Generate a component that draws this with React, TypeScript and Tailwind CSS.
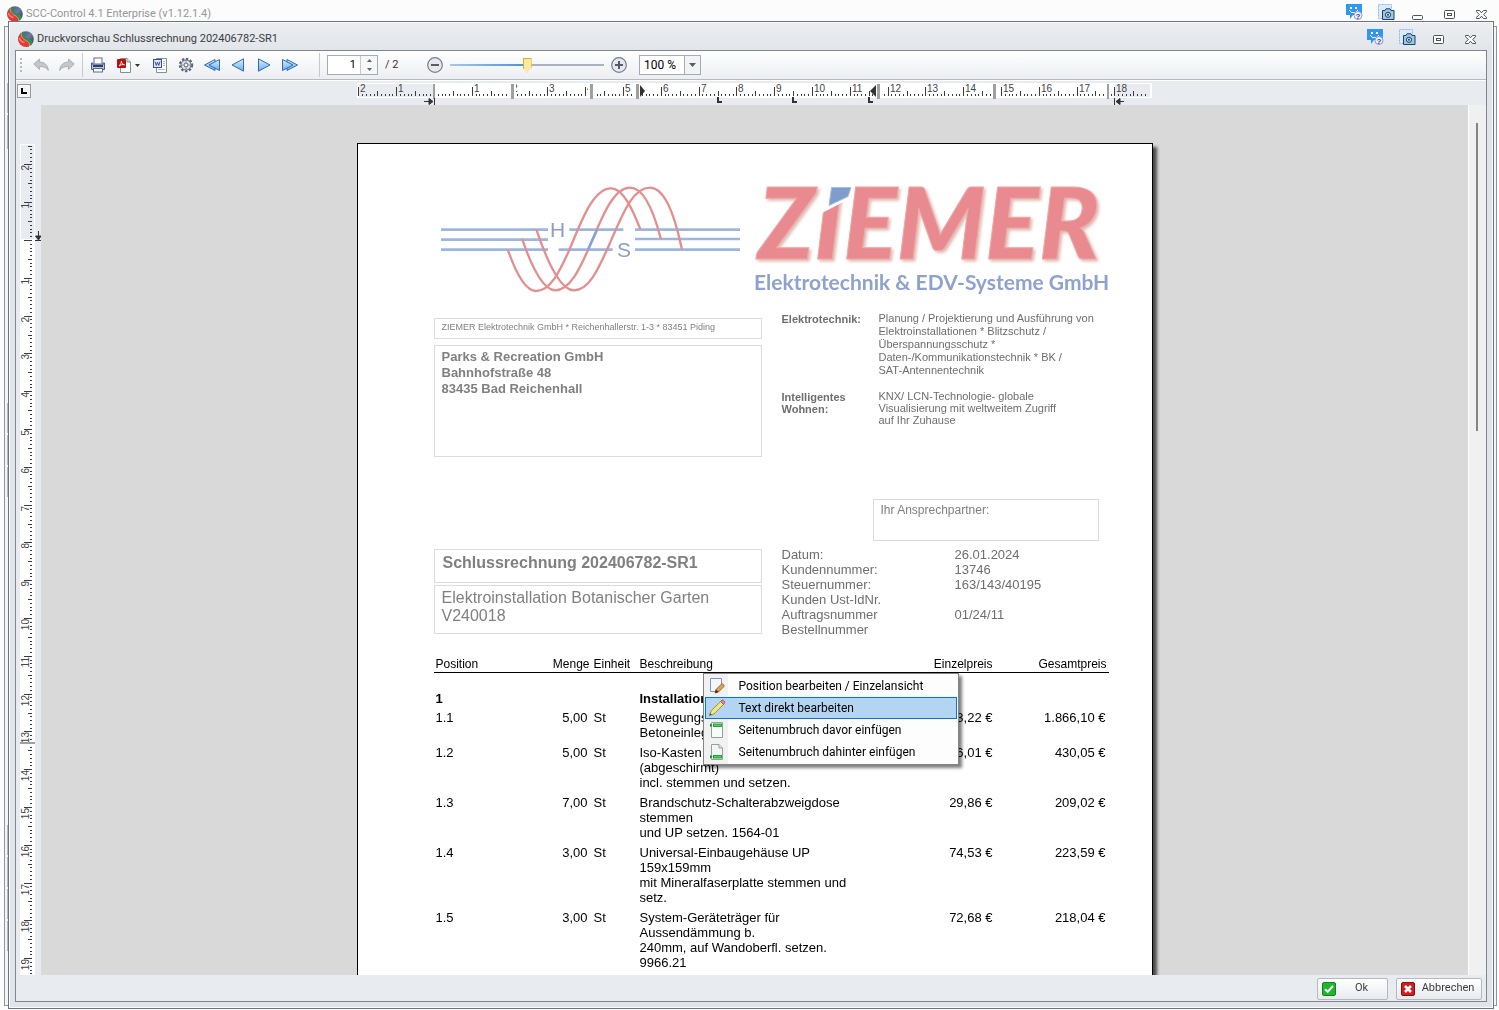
import React, { useState } from 'react';

const CM = 37.8;

const UI_FONT = "font-['Roboto','Open_Sans',sans-serif]";

interface Position {
  nr: string;
  menge: string;
  einheit: string;
  text: string[];
  einzel: string;
  gesamt: string;
}

const positions: Position[] = [
  { nr: '1.1', menge: '5,00', einheit: 'St', text: ['Bewegungsmelder', 'Betoneinlegedose'], einzel: '373,22 €', gesamt: '1.866,10 €' },
  { nr: '1.2', menge: '5,00', einheit: 'St', text: ['Iso-Kasten', '(abgeschirmt)', 'incl. stemmen und setzen.'], einzel: '86,01 €', gesamt: '430,05 €' },
  { nr: '1.3', menge: '7,00', einheit: 'St', text: ['Brandschutz-Schalterabzweigdose', 'stemmen', 'und UP setzen. 1564-01'], einzel: '29,86 €', gesamt: '209,02 €' },
  { nr: '1.4', menge: '3,00', einheit: 'St', text: ['Universal-Einbaugehäuse UP', '159x159mm', 'mit Mineralfaserplatte stemmen und', 'setz.'], einzel: '74,53 €', gesamt: '223,59 €' },
  { nr: '1.5', menge: '3,00', einheit: 'St', text: ['System-Geräteträger für', 'Aussendämmung b.', '240mm, auf Wandoberfl. setzen.', '9966.21'], einzel: '72,68 €', gesamt: '218,04 €' },
];

const meta = [
  ['Datum:', '26.01.2024'],
  ['Kundennummer:', '13746'],
  ['Steuernummer:', '163/143/40195'],
  ['Kunden Ust-IdNr.', ''],
  ['Auftragsnummer', '01/24/11'],
  ['Bestellnummer', ''],
];

/* ---------- Icons ---------- */

const AppLogo = () => (
  <svg width="16" height="16" viewBox="0 0 16 16" className="shrink-0">
    <defs>
      <linearGradient id="navy" x1="0" y1="0" x2="1" y2="1">
        <stop offset="0" stopColor="#3d5277" />
        <stop offset=".5" stopColor="#6b7c9e" />
        <stop offset="1" stopColor="#1d2c4a" />
      </linearGradient>
      <clipPath id="ball">
        <circle cx="8" cy="8" r="7.800" />
      </clipPath>
    </defs>
    <g clipPath="url(#ball)">
      <rect width="16" height="16" fill="url(#navy)" />
      <path d="M5.500 -1C5.500 4 7 6.500 10.500 7.800C13.500 9 15 10.500 15 13L10 17L0 8Z" fill="#2f8f4e" />
      <path d="M3.500 -1C2.500 5 4.500 8 8 9.500C11 10.800 12 12.500 11.500 17H-1V0Z" fill="#ec3432" />
      <path d="M3.300 1C2.600 5 4.500 8 8 9.500C10.600 10.700 11.800 12.300 11.600 15.500" fill="none" stroke="#f2b3a8" strokeWidth=".7" />
      <path d="M1.500 7C2 9.500 4 11 6.500 11.500" fill="none" stroke="#ff8078" strokeWidth="1.500" />
    </g>
  </svg>
);

const ChatIcon = () => (
  <svg width="17" height="17" viewBox="0 0 17 17" className="-mt-[3px]">
    <path d="M0 0H16V11H7L4 15V11H0Z" fill="#2f97f0" />
    <path d="M4 3H6V5H4ZM9 3H11V5H9ZM3 6H4V7H5V8H10V7H11V6H12V7H11V8H10V9H5V8H4V7H3Z" fill="#fff" />
    <circle cx="12" cy="11.500" r="4" fill="#f3f5ff" stroke="#8d95d8" />
    <text x="12" y="14.500" textAnchor="middle" fontSize="8" fontWeight="700" fill="#2a35b0" className="font-['Liberation_Sans',sans-serif]">?</text>
  </svg>
);

const CameraIcon = () => (
  <svg width="17" height="17" viewBox="0 0 17 17" className="-mt-[3px]">
    <rect x=".5" y=".5" width="13" height="14" fill="#d9ebfb" stroke="#8fb6dd" strokeDasharray="2 1" />
    <path d="M4.500 6.500H7L8 4.800H12L13 6.500H16V15.500H4.500Z" fill="#a9c3da" stroke="#0f4674" />
    <circle cx="10" cy="10.800" r="2.600" fill="#c9dceb" stroke="#0f4674" />
    <circle cx="10" cy="10.800" r="1" fill="#0f4674" />
  </svg>
);

const MinIcon = () => (
  <svg width="12" height="10" viewBox="0 0 12 10" className="mt-[2px]">
    <rect x=".5" y="5.500" width="10" height="4" rx="1" fill="#fff" stroke="#4b5157" />
  </svg>
);

const MaxIcon = () => (
  <svg width="12" height="10" viewBox="0 0 12 10" className="mt-[2px]">
    <rect x=".5" y=".5" width="10" height="8" rx="1" fill="#fff" stroke="#4b5157" />
    <rect x="3.500" y="3.500" width="4" height="2" fill="#fff" stroke="#4b5157" />
  </svg>
);

const CloseIcon = () => (
  <svg width="12" height="10" viewBox="0 0 12 10" className="mt-[2px]">
    <path d="M.5 .5H3.500L5.500 2.800L7.500 .5H10.500V1.700L7.700 4.500L10.500 7.300V8.500H7.500L5.500 6.200L3.500 8.500H.5V7.300L3.300 4.500L.5 1.700Z" fill="#fff" stroke="#4b5157" />
  </svg>
);

const UndoIcon = ({ flip = false }: { flip?: boolean }) => (
  <svg width="16" height="14" viewBox="0 0 16 14" className={flip ? '-scale-x-100' : ''}>
    <path d="M.7 6L6.500 1V4C11.500 4 15 7 15.300 12.500C13.500 9.500 10.500 8.500 6.500 8.500V11.500Z" fill="#c3c6ca" stroke="#a3a6ab" strokeWidth=".8" />
  </svg>
);

const PrintIcon = () => (
  <svg width="16" height="16" viewBox="0 0 16 16">
    <rect x="4" y="1" width="8" height="6" fill="#fff" stroke="#5a6b94" />
    <path d="M1.500 6H3V8H13V6H14.500V12.500H1.500Z" fill="#b9c5de" stroke="#4a5c88" />
    <rect x="3" y="8" width="10" height="2" fill="#2c3d6b" />
    <rect x="3.500" y="11.500" width="9" height="3.500" fill="#fff" stroke="#5a6b94" />
  </svg>
);

const PdfIcon = () => (
  <svg width="16" height="16" viewBox="0 0 16 16">
    <path d="M4.500 1.500H11L14.500 5V15.500H4.500Z" fill="#fff" stroke="#7f948c" />
    <path d="M11 1.500V5H14.500" fill="#dfe9e4" stroke="#7f948c" />
    <rect x="1" y="2" width="9" height="9" rx="1" fill="#c00c0c" />
    <path d="M3 9C4.500 7.500 5.300 6 5.400 4C5.800 6.500 6.800 7.400 8.500 7.800C6.500 7.300 4.500 7.800 3 9Z" fill="none" stroke="#fff" strokeWidth=".9" />
  </svg>
);

const WordIcon = () => (
  <svg width="16" height="16" viewBox="0 0 16 16">
    <path d="M4.500 1.500H14.500V15.500H4.500Z" fill="#fff" stroke="#7f948c" />
    <path d="M11 4.500H13M11 6.500H13M11 8.500H13M6 12.500H13" stroke="#b3bdc8" />
    <rect x="1.500" y="2.500" width="8" height="8" fill="#e6ecfa" stroke="#34509a" />
    <path d="M3 4.500L4.300 8.500L5.500 5L6.700 8.500L8 4.500" fill="none" stroke="#34509a" />
  </svg>
);

const GearIcon = () => (
  <svg width="16" height="16" viewBox="0 0 16 16">
    <circle cx="8" cy="8" r="6.200" fill="none" stroke="#5b6274" strokeWidth="2" strokeDasharray="2.400 1.650" />
    <circle cx="8" cy="8" r="5" fill="#dfe3ec" stroke="#5b6274" />
    <circle cx="8" cy="8" r="2" fill="#fff" stroke="#5b6274" />
    <circle cx="8" cy="4.800" r=".6" fill="#5b6274" />
    <circle cx="8" cy="11.200" r=".6" fill="#5b6274" />
    <circle cx="4.800" cy="8" r=".6" fill="#5b6274" />
    <circle cx="11.200" cy="8" r=".6" fill="#5b6274" />
  </svg>
);

const NavIcon = ({ double = false, flip = false }: { double?: boolean; flip?: boolean }) => (
  <svg width="16" height="14" viewBox="0 0 16 14" className={flip ? '-scale-x-100' : ''}>
    <defs>
      <linearGradient id="nav" x1="0" y1="0" x2="0" y2="1">
        <stop offset="0" stopColor="#dceefc" />
        <stop offset="1" stopColor="#6aaeea" />
      </linearGradient>
    </defs>
    {double ? (
      <>
        <path d="M11 1.500V12.500L.5 7Z" fill="url(#nav)" stroke="#2c6db5" strokeLinejoin="round" />
        <path d="M15.500 1.500V12.500L5 7Z" fill="url(#nav)" stroke="#2c6db5" strokeLinejoin="round" />
      </>
    ) : (
      <path d="M13.500 .8V13.200L2 7Z" fill="url(#nav)" stroke="#2c6db5" strokeLinejoin="round" />
    )}
  </svg>
);

const ZoomIcon = ({ plus = false }: { plus?: boolean }) => (
  <svg width="16" height="16" viewBox="0 0 16 16">
    <circle cx="8" cy="8" r="7.300" fill="#e6e8ee" stroke="#777d8c" strokeWidth="1.200" />
    <path d={plus ? 'M4 8H12M8 4V12' : 'M4 8H12'} stroke="#565c69" strokeWidth="2" />
  </svg>
);

const PageEditIcon = () => (
  <svg width="16" height="16" viewBox="0 0 16 16">
    <path d="M1.500 .5H12.500V9L9 13.500H1.500Z" fill="#f4f7fd" stroke="#8493c4" />
    <path d="M6 15L7 11.500L12.500 6C14 5.500 15.500 7 15 8.500L9.500 14Z" fill="#dba45c" stroke="#8a5520" strokeWidth=".8" />
    <path d="M7 11.500L9.500 14L6 15Z" fill="#3a2a1a" />
  </svg>
);

const PencilIcon = () => (
  <svg width="18" height="18" viewBox="0 0 18 18">
    <path d="M1.500 16.500L3 12L12.500 2.500L15.500 5.500L6 15Z" fill="#f3e06a" stroke="#94853a" strokeWidth=".8" />
    <path d="M12.500 2.500L14 1C15.500 .6 17 2 16.700 3.800L15.500 5.500Z" fill="#e88484" stroke="#a75050" strokeWidth=".8" />
    <path d="M4.500 13.500L14 4" stroke="#fbf3b4" />
    <path d="M1.500 16.500L2.200 14.300L3.700 15.800Z" fill="#333" />
  </svg>
);

const BreakBeforeIcon = () => (
  <svg width="14" height="16" viewBox="0 0 14 16">
    <path d="M1.500 .5H12.500V15.500H1.500Z" fill="#f7fbfa" stroke="#8fa39b" />
    <rect x="3.500" y="2" width="8" height="2.500" fill="#3ddc55" stroke="#0f8a22" strokeWidth=".8" />
    <path d="M0 1.500L2.500 3.200L0 5Z" fill="#0f8a22" />
  </svg>
);

const BreakAfterIcon = () => (
  <svg width="14" height="16" viewBox="0 0 14 16">
    <path d="M1.500 .5H9L12.500 4V15.500H1.500Z" fill="#f1f6f4" stroke="#8fa39b" />
    <path d="M9 .5V4H12.500" fill="#dfe9e4" stroke="#8fa39b" />
    <rect x="3.500" y="11.500" width="8" height="2.500" fill="#3ddc55" stroke="#0f8a22" strokeWidth=".8" />
    <path d="M0 11L2.500 12.800L0 14.500Z" fill="#0f8a22" />
  </svg>
);

const OkIcon = () => (
  <svg width="14" height="14" viewBox="0 0 14 14">
    <rect x=".5" y=".5" width="13" height="13" rx="1.500" fill="#1fb52e" stroke="#0c8a1c" />
    <path d="M3 7.200L5.700 9.800L11 4" fill="none" stroke="#fff" strokeWidth="2" />
  </svg>
);

const CancelIcon = () => (
  <svg width="14" height="14" viewBox="0 0 14 14">
    <rect x=".5" y=".5" width="13" height="13" rx="1.500" fill="#cc1f1f" stroke="#8f0f0f" />
    <path d="M4 4L10 10M10 4L4 10" stroke="#fff" strokeWidth="2.600" />
  </svg>
);

/* ---------- Rulers ---------- */

const ticks = (from: number, to: number) => {
  const list: { mm: number; size: number }[] = [];
  for (let mm = from; mm <= to; mm++) {
    list.push({ mm, size: mm % 10 === 0 ? 9 : mm % 5 === 0 ? 5 : 2 });
  }
  return list;
};

const columnMarks = [154, 233, 279, 520, 636];

const HorizontalRuler = () => (
  <svg width="796" height="24" viewBox="0 0 796 24" className="block shrink-0">
    <rect x="0" y="2" width="795" height="15" fill="#fff" />
    <rect x="2" y="3" width="75" height="13" fill="#e8ecf1" />
    <rect x="758" y="3" width="35" height="13" fill="#e8ecf1" />
    {ticks(-20, 188).map(({ mm, size }) => (
      <rect key={mm} x={Math.round(77 + (mm * CM) / 10)} y={15 - size} width="1" height={size} fill="#3c3c3c" />
    ))}
    {Array.from({ length: 21 }, (_, i) => i - 2).filter((n) => n !== 0 && n < 19).map((n) => (
      <text key={n} x={Math.round(77 + n * CM) + 2} y="11" fontSize="10" fill="#444" className="font-['Liberation_Sans',sans-serif]">
        {Math.abs(n)}
      </text>
    ))}
    <rect x="76" y="3" width="2" height="15" fill="#a0a0a0" />
    {columnMarks.map((x) => (
      <g key={x}>
        <rect x={x - 2} y="3" width="7" height="13" fill="#fff" />
        <rect x={x} y="3" width="3" height="15" fill="#a0a0a0" />
      </g>
    ))}
    <rect x="750" y="3" width="2" height="15" fill="#a0a0a0" />
    <path d="M283 4L288 10L283 16Z" fill="#333" />
    <path d="M519 4L513 10L519 16Z" fill="#333" />
    {[361, 436, 512].map((x) => (
      <path key={x} d={`M${x} 16V21H${x + 4}`} fill="none" stroke="#333" strokeWidth="2" />
    ))}
    <path d="M67 20.500H75M77.500 17V24M72 17.500L76 20.500L72 23.500Z" fill="#333" stroke="#333" />
    <path d="M757.500 17V24M759 20.500H767M763 17.500L759 20.500L763 23.500Z" fill="#333" stroke="#333" />
  </svg>
);

const VerticalRuler = () => (
  <svg width="25" height="831" viewBox="0 0 25 831" className="block">
    <rect x="4" y="0" width="15" height="831" fill="#fff" />
    <rect x="5" y="1" width="13" height="94" fill="#e8ecf1" />
    {ticks(-25, 194).map(({ mm, size }) => (
      <rect key={mm} x={16 - (size === 9 ? 8 : size === 5 ? 4 : 2)} y={Math.round(96 + (mm * CM) / 10)} width={size === 9 ? 8 : size === 5 ? 4 : 2} height="1" fill="#3c3c3c" />
    ))}
    {Array.from({ length: 22 }, (_, i) => i - 2).filter((n) => n !== 0 && n < 20).map((n) => {
      const y = Math.round(96 + n * CM) + 1;
      return (
        <text key={n} transform={`translate(13 ${y}) rotate(-90)`} textAnchor="end" fontSize="10" fill="#444" className="font-['Liberation_Sans',sans-serif]">
          {Math.abs(n)}
        </text>
      );
    })}
    <rect x="4" y="598" width="15" height="2" fill="#a0a0a0" />
    <path d="M22.500 87V95M19 96.500H25M19.500 92L22.500 96L25 92Z" fill="#333" stroke="#333" />
  </svg>
);

/* ---------- Letterhead ---------- */

const Letterhead = () => (
  <svg width="676" height="156" viewBox="434 150 676 156" className="block">
    <defs>
      <filter id="relief" x="-5%" y="-10%" width="110%" height="125%">
        <feDropShadow dx="2" dy="2" stdDeviation="1.500" floodColor="#c98f80" floodOpacity=".6" />
      </filter>
    </defs>
    <g transform="translate(430 170) scale(.33333)" fill="none" strokeLinecap="round">
      <path d="M33 179H354M418 179H580M615 179H930M33 209H354M615 207H930M33 239H354M386 239H548M615 239H930" stroke="#9db6de" strokeWidth="8" strokeLinecap="butt" />
      <g stroke="#e48e90" strokeWidth="7">
        <path d="M234 241C262 320 290 363 318 363C365 363 395 290 418 240C455 150 490 55 543 55C580 55 608 120 630 175" />
        <path d="M277 209C305 290 340 361 376 361C420 361 450 295 475 238C510 160 545 53 600 53C640 53 670 120 692 205" />
        <path d="M320 181C350 270 390 361 432 361C480 361 510 285 535 230C575 140 605 53 660 53C705 53 735 140 755 235" />
      </g>
      <path d="M475 236L500 182" stroke="#7ba6dc" strokeWidth="7" />
    </g>
    <g fill="#8d9dcb" className="font-['Liberation_Sans',sans-serif]">
      <text x="550" y="237" fontSize="21">H</text>
      <text x="617" y="257" fontSize="21">S</text>
    </g>
    <g filter="url(#relief)">
      <text x="758" y="259" fontSize="100" fontWeight="900" fontStyle="italic" fill="#e88a90" stroke="#efa9a6" strokeWidth="1" className="font-['Lato',sans-serif]">
        ZIEMER
      </text>
    </g>
    <path d="M823 182H852L851 198L822 213Z" fill="#fff" />
    <path d="M831.500 187.500H851L848 196.500L829 205.500Z" fill="#7f9dcc" stroke="#a9bddf" />
    <text x="754" y="290" fontSize="21" fontWeight="700" fill="#8fa2cd" className="font-['Lato',sans-serif]">
      Elektrotechnik &amp; EDV-Systeme GmbH
    </text>
  </svg>
);

/* ---------- Window parts ---------- */

const CaptionButton = ({ label, children }: { label: string; children: React.ReactNode }) => (
  <button type="button" aria-label={label} className="flex h-5 w-8 items-center justify-center">
    {children}
  </button>
);

const ToolButton = ({ label, children }: { label: string; children: React.ReactNode }) => (
  <button type="button" aria-label={label} className="flex h-6 w-[26px] shrink-0 items-center justify-center">
    {children}
  </button>
);

const Separator = () => <div className="h-6 w-px shrink-0 bg-[#c6cad0]" />;

const Toolbar = () => {
  const [page, setPage] = useState('1');
  const [zoom, setZoom] = useState(50);

  return (
    <div className="flex h-[29px] shrink-0 items-center border-b border-[#b4bac2] bg-linear-to-b from-white to-[#eceef2]">
      <div className="mr-[6px] ml-1 flex w-[2px] flex-col gap-[2px]">
        {[0, 1, 2, 3].map((i) => <span key={i} className="size-[2px] bg-[#b5b9bf]" />)}
      </div>
      <ToolButton label="Rückgängig"><UndoIcon /></ToolButton>
      <ToolButton label="Wiederholen"><UndoIcon flip /></ToolButton>
      <div className="mx-[2px] flex"><Separator /></div>
      <ToolButton label="Drucken"><PrintIcon /></ToolButton>
      <button type="button" aria-label="PDF-Export" className="flex h-6 w-9 items-center gap-[3px] pl-[5px]">
        <PdfIcon />
        <svg width="5" height="3" viewBox="0 0 5 3"><path d="M0 0H5L2.500 3Z" fill="#333" /></svg>
      </button>
      <ToolButton label="Word-Export"><WordIcon /></ToolButton>
      <ToolButton label="Einstellungen"><GearIcon /></ToolButton>
      <ToolButton label="Erste Seite"><NavIcon double /></ToolButton>
      <ToolButton label="Vorherige Seite"><NavIcon /></ToolButton>
      <ToolButton label="Nächste Seite"><NavIcon flip /></ToolButton>
      <ToolButton label="Letzte Seite"><NavIcon double flip /></ToolButton>
      <div className="mr-[7px] ml-4 flex"><Separator /></div>
      <div className="flex h-5 w-[51px] border border-[#a5abb5] bg-white">
        <input
          aria-label="Seite"
          value={page}
          onChange={(e) => setPage(e.target.value)}
          className="w-8 pr-1 text-right text-[11px] text-black outline-none"
        />
        <div className="flex flex-1 flex-col border-l border-[#c6cad0] bg-[#f7f8fa]">
          <button type="button" aria-label="Seite vor" className="flex flex-1 items-center justify-center">
            <svg width="5" height="3" viewBox="0 0 5 3"><path d="M0 3H5L2.500 0Z" fill="#666" /></svg>
          </button>
          <button type="button" aria-label="Seite zurück" className="flex flex-1 items-center justify-center">
            <svg width="5" height="3" viewBox="0 0 5 3"><path d="M0 0H5L2.500 3Z" fill="#666" /></svg>
          </button>
        </div>
      </div>
      <span className="ml-[7px] w-9 text-[11px] text-[#333]">/ 2</span>
      <button type="button" aria-label="Verkleinern" className="ml-[6px]"><ZoomIcon /></button>
      <input
        type="range"
        aria-label="Zoom"
        value={zoom}
        onChange={(e) => setZoom(Number(e.target.value))}
        className="mx-[7px] h-4 w-[154px] appearance-none bg-transparent [&::-webkit-slider-runnable-track]:h-[3px] [&::-webkit-slider-runnable-track]:bg-[linear-gradient(to_right,#a9c6e4,#4f8fd0_50%,#a9b2bd_50%,#a9b2bd)] [&::-webkit-slider-runnable-track]:[background-size:100%_2px] [&::-webkit-slider-runnable-track]:bg-no-repeat [&::-webkit-slider-thumb]:-mt-[6px] [&::-webkit-slider-thumb]:h-[15px] [&::-webkit-slider-thumb]:w-[9px] [&::-webkit-slider-thumb]:appearance-none [&::-webkit-slider-thumb]:border [&::-webkit-slider-thumb]:border-[#dcae30] [&::-webkit-slider-thumb]:bg-[#fbe9a0] [&::-webkit-slider-thumb]:[clip-path:polygon(0_0,100%_0,100%_70%,50%_100%,0_70%)]"
      />
      <button type="button" aria-label="Vergrößern"><ZoomIcon plus /></button>
      <div className="relative ml-3 h-5 w-[62px] border border-[#a5abb5] bg-white">
        <select aria-label="Zoomstufe" className="h-full w-full appearance-none pl-1 text-xs text-black outline-none">
          <option>100 %</option>
          <option>150 %</option>
          <option>200 %</option>
        </select>
        <span className="pointer-events-none absolute inset-y-0 right-0 flex w-4 items-center justify-center border-l border-[#a5abb5] bg-[#f2f3f6]">
          <svg width="7" height="4" viewBox="0 0 7 4"><path d="M0 0H7L3.500 4Z" fill="#555c66" /></svg>
        </span>
      </div>
    </div>
  );
};

const menuItems = [
  { label: 'Position bearbeiten / Einzelansicht', icon: <PageEditIcon /> },
  { label: 'Text direkt bearbeiten', icon: <PencilIcon />, active: true },
  { label: 'Seitenumbruch davor einfügen', icon: <BreakBeforeIcon /> },
  { label: 'Seitenumbruch dahinter einfügen', icon: <BreakAfterIcon /> },
];

const ContextMenu = () => (
  <div
    role="menu"
    className={`absolute top-[529px] left-[345px] w-64 border border-[#858585] bg-[linear-gradient(to_right,#f1f1f1_24px,#fdfdfd_24px)] p-px shadow-[3px_3px_3px_rgba(0,0,0,0.5)] ${UI_FONT}`}
  >
    {menuItems.map((item) => (
      <button
        key={item.label}
        type="button"
        role="menuitem"
        className={`flex h-[22px] w-full items-center border text-left text-xs text-black ${item.active ? 'border-[#0078d7] bg-[#b3d5f2]' : 'border-transparent'}`}
      >
        <span className="flex w-[22px] justify-center">{item.icon}</span>
        <span className="pl-[11px]">{item.label}</span>
      </button>
    ))}
  </div>
);

const InvoicePage = () => (
  <article className="relative box-content h-[1122px] w-[794px] shrink-0 border border-black bg-white font-['Liberation_Sans',sans-serif] text-[13px] leading-[15px] text-black shadow-[4px_4px_3px_rgba(0,0,0,0.65)]">
    <div className="pt-[6px] pr-[42px] pl-[76px]">
      <Letterhead />

      <section className="grid grid-cols-[328px_1fr] gap-x-5 text-[#6e6e6e]">
        <div className="pt-3">
          <p className="h-[21px] border border-[#dcdcdc] px-[7px] pt-px text-[9px] text-[#808080]">
            ZIEMER Elektrotechnik GmbH * Reichenhallerstr. 1-3 * 83451 Piding
          </p>
          <address className="mt-[6px] h-28 border border-[#dcdcdc] px-[7px] pt-[3px] font-bold not-italic leading-4 text-[#808080]">
            Parks &amp; Recreation GmbH<br />
            Bahnhofstraße 48<br />
            83435 Bad Reichenhall
          </address>
        </div>
        <dl className="grid grid-cols-[97px_1fr] content-start gap-y-3 pt-[6px] text-[11px] leading-[13px]">
          <dt className="pt-px font-bold">Elektrotechnik:</dt>
          <dd>
            Planung / Projektierung und Ausführung von<br />
            Elektroinstallationen * Blitzschutz /<br />
            Überspannungsschutz *<br />
            Daten-/Kommunikationstechnik * BK /<br />
            SAT-Antennentechnik
          </dd>
          <dt className="pt-[2px] font-bold leading-3">Intelligentes<br />Wohnen:</dt>
          <dd className="pt-px leading-3">
            KNX/ LCN-Technologie- globale<br />
            Visualisierung mit weltweitem Zugriff<br />
            auf Ihr Zuhause
          </dd>
        </dl>
      </section>

      <section className="mt-[42px] grid grid-cols-[328px_1fr] gap-x-5 text-[#6e6e6e]">
        <div className="pt-[50px]">
          <h1 className="h-[34px] border border-[#dcdcdc] px-2 pt-1 text-base leading-[18px] font-bold text-[#808080]">
            Schlussrechnung 202406782-SR1
          </h1>
          <p className="mt-[2px] h-[49px] border border-[#dcdcdc] px-[7px] pt-[3px] text-base leading-[18px] text-[#808080]">
            Elektroinstallation Botanischer Garten<br />
            V240018
          </p>
        </div>
        <div>
          <p className="ml-[91px] h-[42px] w-[226px] border border-[#dcdcdc] px-[7px] pt-[2px] text-xs text-[#808080]">Ihr Ansprechpartner:</p>
          <dl className="mt-[6px] grid grid-cols-[173px_1fr]">
            {meta.map(([label, value]) => (
              <React.Fragment key={label}>
                <dt>{label}</dt>
                <dd>{value}</dd>
              </React.Fragment>
            ))}
          </dl>
        </div>
      </section>

      <table className="mt-[18px] w-[675px] table-fixed border-collapse">
        <colgroup>
          <col className="w-[100px]" />
          <col className="w-14" />
          <col className="w-[50px]" />
          <col className="w-[220px]" />
          <col className="w-[133px]" />
          <col className="w-[116px]" />
        </colgroup>
        <thead>
          <tr className="h-[17px] border-b border-black text-xs leading-4 [&>th]:p-0 [&>th]:pt-px [&>th]:font-normal">
            <th className="text-left"><span className="pl-[2px]">Position</span></th>
            <th className="text-right">Menge</th>
            <th className="text-left"><span className="pl-1">Einheit</span></th>
            <th className="text-left">Beschreibung</th>
            <th className="text-right">Einzelpreis</th>
            <th className="text-right"><span className="pr-[2px]">Gesamtpreis</span></th>
          </tr>
        </thead>
        <tbody className="align-top">
          <tr className="font-bold">
            <td className="pt-[18px] pb-1 pl-[2px]">1</td>
            <td />
            <td />
            <td className="pt-[18px] pb-1">Installationsarbeiten</td>
            <td />
            <td />
          </tr>
          {positions.map((p) => (
            <tr key={p.nr}>
              <td className="pl-[2px]">{p.nr}</td>
              <td className="pr-[2px] text-right">{p.menge}</td>
              <td className="pl-1">{p.einheit}</td>
              <td className="pb-[5px] whitespace-nowrap">
                {p.text.map((line) => <div key={line}>{line}</div>)}
              </td>
              <td className="text-right">{p.einzel}</td>
              <td className="pr-[3px] text-right">{p.gesamt}</td>
            </tr>
          ))}
        </tbody>
      </table>
    </div>
    <ContextMenu />
  </article>
);

export default function App() {
  return (
    <div className={`relative flex h-screen flex-col overflow-hidden bg-[#fcfcfc] text-[11px] text-[#3c3c3c] ${UI_FONT}`}>
      {/* main window behind the preview */}
      <div className="absolute top-[26px] right-[2px] bottom-1 left-1 border border-[#8d949d] bg-[#f3f5f7]">
        <div className="ml-[2px] flex w-1 flex-col gap-[2px] pt-14">
          <div className="h-[30px] bg-[#b4b8bd]" />
          <div className="mb-[252px] h-[34px] bg-[#b4b8bd]" />
          <div className="h-[30px] bg-[#b4b8bd]" />
          <div className="h-[30px] bg-[#b4b8bd]" />
          <div className="mb-[326px] h-[30px] bg-[#b4b8bd]" />
          <div className="h-[30px] bg-[#b4b8bd]" />
          <div className="h-[30px] bg-[#b4b8bd]" />
          <div className="h-[30px] bg-[#b4b8bd]" />
          <div className="h-[30px] bg-[#b4b8bd]" />
        </div>
      </div>
      <header className="flex h-[21px] shrink-0 items-center justify-between pt-[7px] pr-px pl-[7px]">
        <div className="flex items-center gap-[3px] text-[11px] text-[#969696]">
          <AppLogo />
          <span className="pt-px">SCC-Control 4.1 Enterprise (v1.12.1.4)</span>
        </div>
        <div className="flex">
          <CaptionButton label="Hilfe"><ChatIcon /></CaptionButton>
          <CaptionButton label="Bildschirmfoto"><CameraIcon /></CaptionButton>
          <CaptionButton label="Minimieren"><MinIcon /></CaptionButton>
          <CaptionButton label="Maximieren"><MaxIcon /></CaptionButton>
          <CaptionButton label="Schließen"><CloseIcon /></CaptionButton>
        </div>
      </header>

      <section className="relative mr-[5px] mb-px ml-2 flex min-h-0 flex-1 flex-col border border-[#6b7480] bg-[#e1e5e9] bg-linear-to-b from-[#eceef1] to-[#e1e5e9] to-[30px] px-[6px] pb-[6px] shadow-[inset_0_0_0_1px_#fafbfc]">
        <div className="flex h-7 shrink-0 items-center justify-between pt-[5px] pl-[3px]">
          <div className="flex items-center gap-[3px]">
            <AppLogo />
            <h2 className="pt-[2px]">Druckvorschau Schlussrechnung 202406782-SR1</h2>
          </div>
          <div className="flex">
            <CaptionButton label="Hilfe"><ChatIcon /></CaptionButton>
            <CaptionButton label="Bildschirmfoto"><CameraIcon /></CaptionButton>
            <CaptionButton label="Maximieren"><MaxIcon /></CaptionButton>
            <CaptionButton label="Schließen"><CloseIcon /></CaptionButton>
          </div>
        </div>

        <div className="flex min-h-0 flex-1 flex-col border border-[#7f868f] bg-[#e8ecf1]">
          <Toolbar />
          <div className="flex h-[25px] shrink-0 border-t border-white">
            <div className="w-[25px] pt-[3px] pl-px">
              <button type="button" aria-label="Tabulator" className="flex size-[14px] items-center justify-center border border-[#999] bg-[#f4f5f7]">
                <svg width="6" height="6" viewBox="0 0 6 6"><path d="M1 0V5H6" fill="none" stroke="#000" strokeWidth="2" /></svg>
              </button>
            </div>
            <div className="flex flex-1 justify-center overflow-hidden pr-[18px]"><HorizontalRuler /></div>
          </div>
          <div className="flex min-h-0 flex-1">
            <div className="w-[25px] shrink-0 overflow-hidden pt-[39px]"><VerticalRuler /></div>
            <main className="flex flex-1 items-start justify-center overflow-auto bg-[#d9d9d9] pt-[38px] [scrollbar-width:none]">
              <InvoicePage />
            </main>
            <div className="flex w-[18px] justify-center border-l border-white bg-[#f0f0f0] pt-[18px] pr-px">
              <div className="h-[308px] w-[2px] bg-[#858585]" />
            </div>
          </div>
          <footer className="flex h-[26px] shrink-0 items-center justify-end gap-2 pt-px pr-1">
            <button type="button" className="flex h-[22px] w-[71px] items-center rounded-[2px] border border-[#b3b9c1] bg-linear-to-b from-white to-[#e9ebef] pl-1">
              <OkIcon />
              <span className="flex-1 text-center">Ok</span>
            </button>
            <button type="button" className="flex h-[22px] w-[86px] items-center rounded-[2px] border border-[#b3b9c1] bg-linear-to-b from-white to-[#e9ebef] pl-1">
              <CancelIcon />
              <span className="flex-1 text-center">Abbrechen</span>
            </button>
          </footer>
        </div>
      </section>
    </div>
  );
}
